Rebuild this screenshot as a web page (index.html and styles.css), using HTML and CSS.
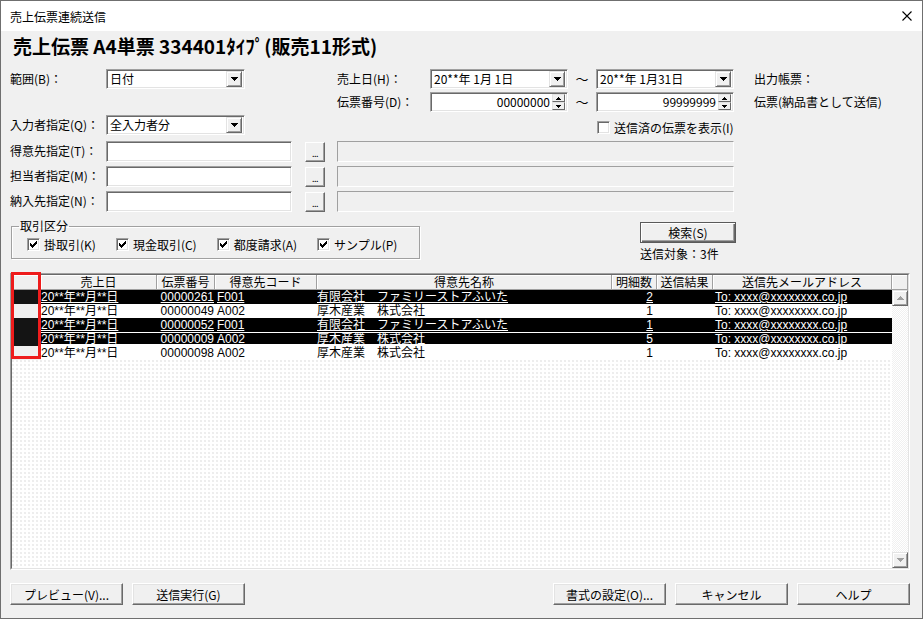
FILE: index.html
```html
<!DOCTYPE html>
<html lang="ja">
<head>
    <meta charset="UTF-8">
    <title>売上伝票連続送信</title>
    <link rel="stylesheet" href="styles.css">
</head>
<body>

<div class="window">
    <div class="titlebar">
        <span class="title">売上伝票連続送信</span>
        <svg class="close" width="10" height="10" viewBox="0 0 10 10"><path d="M0.5 0.5L9.5 9.5M9.5 0.5L0.5 9.5" stroke="#000" stroke-width="1.1"/></svg>
    </div>

    <div class="client">
        <h1 class="heading">売上伝票 A4単票 334401ﾀｲﾌﾟ(販売11形式)</h1>

        <div class="form-grid">
            <!-- row 1 -->
            <span class="lbl r1 c-lbl">範囲(B)：</span>
            <div class="field combo r1 c-main w139">
                <span class="combo-text">日付</span>
                <span class="drop"><svg width="7" height="4" viewBox="0 0 7 4"><path d="M0 0H7V1H6V2H5V3H4V4H3V3H2V2H1V1H0Z"/></svg></span>
            </div>
            <span class="lbl r1 c-lbl2">売上日(H)：</span>
            <div class="field combo r1 c-from">
                <span class="combo-text">20**年 1月 1日</span>
                <span class="drop"><svg width="7" height="4" viewBox="0 0 7 4"><path d="M0 0H7V1H6V2H5V3H4V4H3V3H2V2H1V1H0Z"/></svg></span>
            </div>
            <span class="tilde r1 c-tilde">～</span>
            <div class="field combo r1 c-to">
                <span class="combo-text">20**年 1月31日</span>
                <span class="drop"><svg width="7" height="4" viewBox="0 0 7 4"><path d="M0 0H7V1H6V2H5V3H4V4H3V3H2V2H1V1H0Z"/></svg></span>
            </div>
            <span class="lbl r1 c-right">出力帳票：</span>

            <!-- row 2 -->
            <span class="lbl r2 c-lbl2">伝票番号(D)：</span>
            <div class="field spin r2 c-from">
                <span class="spin-text">00000000</span>
                <span class="spin-btns">
                    <span class="spin-btn"><svg width="5" height="3" viewBox="0 0 5 3"><path d="M0 3H5V2H4V1H3V0H2V1H1V2H0Z"/></svg></span>
                    <span class="spin-btn"><svg width="5" height="3" viewBox="0 0 5 3"><path d="M0 0H5V1H4V2H3V3H2V2H1V1H0Z"/></svg></span>
                </span>
            </div>
            <span class="tilde r2 c-tilde">～</span>
            <div class="field spin r2 c-to">
                <span class="spin-text">99999999</span>
                <span class="spin-btns">
                    <span class="spin-btn"><svg width="5" height="3" viewBox="0 0 5 3"><path d="M0 3H5V2H4V1H3V0H2V1H1V2H0Z"/></svg></span>
                    <span class="spin-btn"><svg width="5" height="3" viewBox="0 0 5 3"><path d="M0 0H5V1H4V2H3V3H2V2H1V1H0Z"/></svg></span>
                </span>
            </div>
            <span class="lbl r2 c-right">伝票(納品書として送信)</span>

            <!-- row 3 -->
            <span class="lbl r3 c-lbl">入力者指定(Q)：</span>
            <div class="field combo r3 c-main w139">
                <span class="combo-text">全入力者分</span>
                <span class="drop"><svg width="7" height="4" viewBox="0 0 7 4"><path d="M0 0H7V1H6V2H5V3H4V4H3V3H2V2H1V1H0Z"/></svg></span>
            </div>
            <label class="checkline r3 c-sent">
                <span class="check"></span>
                <span>送信済の伝票を表示(I)</span>
            </label>

            <!-- rows 4 - 6 -->
            <span class="lbl r4 c-lbl">得意先指定(T)：</span>
            <div class="field text r4 c-main"></div>
            <span class="dots r4 c-btn">...</span>
            <div class="readonly r4 c-name"></div>

            <span class="lbl r5 c-lbl">担当者指定(M)：</span>
            <div class="field text r5 c-main"></div>
            <span class="dots r5 c-btn">...</span>
            <div class="readonly r5 c-name"></div>

            <span class="lbl r6 c-lbl">納入先指定(N)：</span>
            <div class="field text r6 c-main"></div>
            <span class="dots r6 c-btn">...</span>
            <div class="readonly r6 c-name"></div>
        </div>

        <div class="middle">
            <fieldset class="group">
                <legend>取引区分</legend>
                <div class="group-row">
                    <label class="checkline"><span class="check on"></span><span>掛取引(K)</span></label>
                    <label class="checkline"><span class="check on"></span><span>現金取引(C)</span></label>
                    <label class="checkline"><span class="check on"></span><span>都度請求(A)</span></label>
                    <label class="checkline"><span class="check on"></span><span>サンプル(P)</span></label>
                </div>
            </fieldset>
            <div class="search-col">
                <span class="btn default search">検索(S)</span>
                <span class="count">送信対象：3件</span>
            </div>
        </div>

        <div class="grid">
            <span class="mark"></span>
            <div class="grid-inner">
                <div class="grid-head">
                    <span class="hcell"></span>
                    <span class="hcell">売上日</span>
                    <span class="hcell">伝票番号</span>
                    <span class="hcell">得意先コード</span>
                    <span class="hcell">得意先名称</span>
                    <span class="hcell">明細数</span>
                    <span class="hcell">送信結果</span>
                    <span class="hcell">送信先メールアドレス</span>
                    <span class="hcell corner"></span>
                </div>
                <div class="grid-body">
                    <div class="rows">
                        <div class="row sel">
                            <span class="rh"></span><span>20**年**月**日</span><span class="num">00000261</span><span class="code">F001</span><span>有限会社　ファミリーストアふいた</span><span class="num qty">2</span><span></span><span class="mail">To: xxxx@xxxxxxxx.co.jp</span>
                        </div>
                        <div class="row">
                            <span class="rh"></span><span>20**年**月**日</span><span class="num">00000049</span><span class="code">A002</span><span>厚木産業　株式会社</span><span class="num qty">1</span><span></span><span class="mail">To: xxxx@xxxxxxxx.co.jp</span>
                        </div>
                        <div class="row sel">
                            <span class="rh"></span><span>20**年**月**日</span><span class="num">00000052</span><span class="code">F001</span><span>有限会社　ファミリーストアふいた</span><span class="num qty">1</span><span></span><span class="mail">To: xxxx@xxxxxxxx.co.jp</span>
                        </div>
                        <div class="row sel focus">
                            <span class="rh"></span><span>20**年**月**日</span><span class="num">00000009</span><span class="code">A002</span><span>厚木産業　株式会社</span><span class="num qty">5</span><span></span><span class="mail">To: xxxx@xxxxxxxx.co.jp</span>
                        </div>
                        <div class="row">
                            <span class="rh"></span><span>20**年**月**日</span><span class="num">00000098</span><span class="code">A002</span><span>厚木産業　株式会社</span><span class="num qty">1</span><span></span><span class="mail">To: xxxx@xxxxxxxx.co.jp</span>
                        </div>
                        <div class="filler"></div>
                    </div>
                    <div class="vscroll">
                        <span class="sb-btn"><svg width="7" height="4" viewBox="0 0 7 4"><path d="M0 4H7V3H6V2H5V1H4V0H3V1H2V2H1V3H0Z"/></svg></span>
                        <span class="sb-track"></span>
                        <span class="sb-btn"><svg width="7" height="4" viewBox="0 0 7 4"><path d="M0 0H7V1H6V2H5V3H4V4H3V3H2V2H1V1H0Z"/></svg></span>
                    </div>
                </div>
            </div>
        </div>

        <div class="footer">
            <div class="btn-group">
                <span class="btn">プレビュー(V)...</span>
                <span class="btn">送信実行(G)</span>
            </div>
            <div class="btn-group">
                <span class="btn">書式の設定(O)...</span>
                <span class="btn">キャンセル</span>
                <span class="btn">ヘルプ</span>
            </div>
        </div>
    </div>
</div>

</body>
</html>
```

FILE: styles.css
```css
* {
    box-sizing: border-box;
}
html, body {
    margin: 0;
    padding: 0;
}
body {
    font-family: "Noto Sans CJK JP", "Noto Sans", sans-serif;
    font-size: 12px;
    color: #000;
    background: #f0f0f0;
}

/* window frame */
.window {
    width: 923px;
    height: 619px;
    border: 1px solid #6f6f6f;
    background: #f0f0f0;
    display: flex;
    flex-direction: column;
}
.titlebar {
    height: 30px;
    flex: none;
    background: #fff;
    display: flex;
    align-items: center;
    justify-content: space-between;
    padding: 0 10px 0 9px;
}
.title {
    font-size: 12px;
}
.close {
    display: block;
}
.client {
    flex: 1;
    padding: 0 12px 0 9px;
}
.heading {
    margin: 3px 0 0 3px;
    font-size: 19px;
    line-height: 24px;
    font-weight: bold;
}

/* upper form */
.form-grid {
    margin-top: 11px;
    display: grid;
    grid-template-columns: 96px 186px 13px 20px 12px 93px 138px 28px 138px 20px 1fr;
    grid-template-rows: 23px 23px 26px 25px 25px 21px;
}
.r1 { grid-row: 1; }
.r2 { grid-row: 2; }
.r3 { grid-row: 3; }
.r4 { grid-row: 4; }
.r5 { grid-row: 5; }
.r6 { grid-row: 6; }
.c-lbl { grid-column: 1; }
.c-main { grid-column: 2; }
.c-btn { grid-column: 4; }
.c-lbl2 { grid-column: 6; }
.c-from { grid-column: 7; }
.c-tilde { grid-column: 8; }
.c-to { grid-column: 9; }
.c-right { grid-column: 11; }
.c-sent { grid-column: 9 / -1; }
.c-name { grid-column: 6 / 10; }

.lbl {
    height: 20px;
    line-height: 20px;
    white-space: nowrap;
}
.tilde {
    height: 20px;
    line-height: 20px;
    text-align: center;
    font-size: 13px;
}
.field {
    height: 20px;
    background: #fff;
    border: 1px solid;
    border-color: #a0a0a0 #fff #fff #a0a0a0;
    box-shadow: inset 1px 1px 0 #696969, inset -1px -1px 0 #e3e3e3;
    display: flex;
    align-items: center;
    padding: 2px;
}
.field.text {
    height: 21px;
}
.w139 {
    width: 139px;
}
.combo-text {
    flex: 1;
    padding-left: 1px;
    line-height: 16px;
    white-space: nowrap;
}
.drop {
    width: 16px;
    height: 16px;
    display: flex;
    align-items: center;
    justify-content: center;
    background: #f0f0f0;
    border: 1px solid;
    border-color: #e3e3e3 #696969 #696969 #e3e3e3;
    box-shadow: inset 1px 1px 0 #fff, inset -1px -1px 0 #a0a0a0;
}
.drop svg,
.spin-btn svg {
    display: block;
    fill: #000;
}
.spin-text {
    flex: 1;
    text-align: right;
    padding-right: 2px;
    line-height: 16px;
}
.spin-btns {
    width: 13px;
    height: 16px;
    display: flex;
    flex-direction: column;
}
.spin-btn {
    flex: 1;
    display: flex;
    align-items: center;
    justify-content: center;
    background: #f0f0f0;
    border: 1px solid;
    border-color: #e3e3e3 #696969 #696969 #e3e3e3;
}
.readonly {
    height: 21px;
    border: 1px solid;
    border-color: #a0a0a0 #fff #fff #a0a0a0;
    background: #f0f0f0;
}
.dots {
    width: 20px;
    height: 20px;
    margin-top: 1px;
    text-align: center;
    line-height: 22px;
    font-size: 9px;
    letter-spacing: -0.5px;
    border: 1px solid;
    border-color: #fff #696969 #696969 #fff;
    box-shadow: inset -1px -1px 0 #a0a0a0;
}

/* checkboxes */
.checkline {
    display: flex;
    align-items: center;
    gap: 4px;
    white-space: nowrap;
}
.c-sent {
    padding-top: 5px;
    height: 20px;
    padding-left: 1px;
}
.check {
    width: 13px;
    height: 13px;
    flex: none;
    background: #fff;
    border: 1px solid;
    border-color: #a0a0a0 #fff #fff #a0a0a0;
    box-shadow: inset 1px 1px 0 #696969, inset -1px -1px 0 #e3e3e3;
}
.check.on {
    background: #fff url("data:image/svg+xml,%3Csvg xmlns='http://www.w3.org/2000/svg' width='7' height='7'%3E%3Cpath d='M6 0h1v1h-1zM5 1h2v1h-2zM0 2h1v1h-1zM4 2h3v1h-3zM0 3h2v1h-2zM3 3h3v1h-3zM0 4h5v1h-5zM1 5h3v1h-3zM2 6h1v1h-1z'/%3E%3C/svg%3E") no-repeat 2px 2px;
}

/* group box and search */
.middle {
    margin-top: 7px;
    display: flex;
    align-items: flex-start;
}
.group {
    width: 409px;
    margin: 0 0 0 1px;
    padding: 0 6px 6px 7px;
    border: 1px solid #a0a0a0;
    box-shadow: 1px 1px 0 #fff, inset 1px 1px 0 #fff;
}
.group legend {
    padding: 0 1px;
    line-height: 14px;
}
.group-row {
    margin-top: 3px;
    height: 16px;
    padding-left: 8px;
    display: flex;
    gap: 20px;
}
.search-col {
    margin-left: 220px;
    display: flex;
    flex-direction: column;
}
.count {
    margin-top: 3px;
    line-height: 16px;
}

/* buttons */
.btn {
    display: flex;
    align-items: center;
    justify-content: center;
    width: 113px;
    height: 22px;
    background: #f0f0f0;
    border: 1px solid;
    border-color: #fff #696969 #696969 #fff;
    box-shadow: inset -1px -1px 0 #a0a0a0, inset 1px 1px 0 #e3e3e3;
    white-space: nowrap;
}
.btn.default {
    border-color: #5a5a5a;
    box-shadow: inset 1px 1px 0 #fff, inset -1px -1px 0 #696969, inset -2px -2px 0 #a0a0a0;
}
.btn.search {
    margin-top: 3px;
    width: 96px;
    height: 21px;
}

/* data grid */
.grid {
    position: relative;
    margin-top: 11px;
    width: 900px;
    height: 297px;
    border: 1px solid;
    border-color: #a0a0a0 #fff #fff #a0a0a0;
}
.grid-inner {
    height: 100%;
    border: 1px solid;
    border-color: #696969 #e3e3e3 #e3e3e3 #696969;
    display: flex;
    flex-direction: column;
    background: #fff;
}
.grid-head,
.row {
    display: grid;
    grid-template-columns: 29px 116px 58px 102px 295px 45px 56px 179px;
}
.grid-head {
    grid-template-columns: 29px 116px 58px 102px 295px 45px 56px 179px 16px;
    height: 15px;
    flex: none;
}
.hcell {
    background: #f0f0f0;
    border-right: 1px solid #a0a0a0;
    border-bottom: 1px solid #a0a0a0;
    box-shadow: inset 1px 1px 0 #fff;
    text-align: center;
    line-height: 14px;
    white-space: nowrap;
}
.grid-body {
    flex: 1;
    display: flex;
    min-height: 0;
}
.rows {
    flex: 1;
    display: flex;
    flex-direction: column;
}
.row {
    height: 14px;
    line-height: 14px;
    font-family: "Liberation Sans", "Noto Sans CJK JP", sans-serif;
    background: #fff;
    white-space: nowrap;
}
.row .rh {
    background: #f0f0f0;
}
.row.sel {
    background: #000;
    color: #fff;
}
.row.sel span {
    text-decoration: underline;
}
.row.sel .rh {
    background: #141414;
}
.row.focus span {
    box-shadow: inset 0 1px 0 #fff, inset 0 -2px 0 #fff;
}
.row.focus .rh {
    box-shadow: none;
}
.num {
    text-align: right;
    padding-right: 1px;
}
.code {
    padding-left: 2px;
}
.qty {
    padding-right: 4px;
}
.mail {
    padding-left: 2px;
}
.filler {
    flex: 1;
    background-color: #fff;
    background-image: radial-gradient(circle at 1px 1px, #ededed 0.7px, transparent 0.9px);
    background-size: 4px 4px;
}
.vscroll {
    width: 16px;
    display: flex;
    flex-direction: column;
}
.sb-btn {
    height: 16px;
    display: flex;
    align-items: center;
    justify-content: center;
    background: #f0f0f0;
    border: 1px solid;
    border-color: #e3e3e3 #696969 #696969 #e3e3e3;
    box-shadow: inset 1px 1px 0 #fff, inset -1px -1px 0 #a0a0a0;
}
.sb-btn svg {
    display: block;
    fill: #a0a0a0;
}
.sb-track {
    flex: 1;
    background: repeating-conic-gradient(#f0f0f0 0 25%, #fff 0 50%) 0 0 / 2px 2px;
}

/* red frame drawn round the row selectors */
.mark {
    position: absolute;
    left: 0;
    top: -2px;
    width: 30px;
    height: 87px;
    border: 3px solid #ee1c1c;
    z-index: 2;
}

/* bottom buttons */
.footer {
    margin-top: 13px;
    width: 900px;
    display: flex;
    justify-content: space-between;
}
.btn-group {
    display: flex;
    gap: 9px;
}
```
